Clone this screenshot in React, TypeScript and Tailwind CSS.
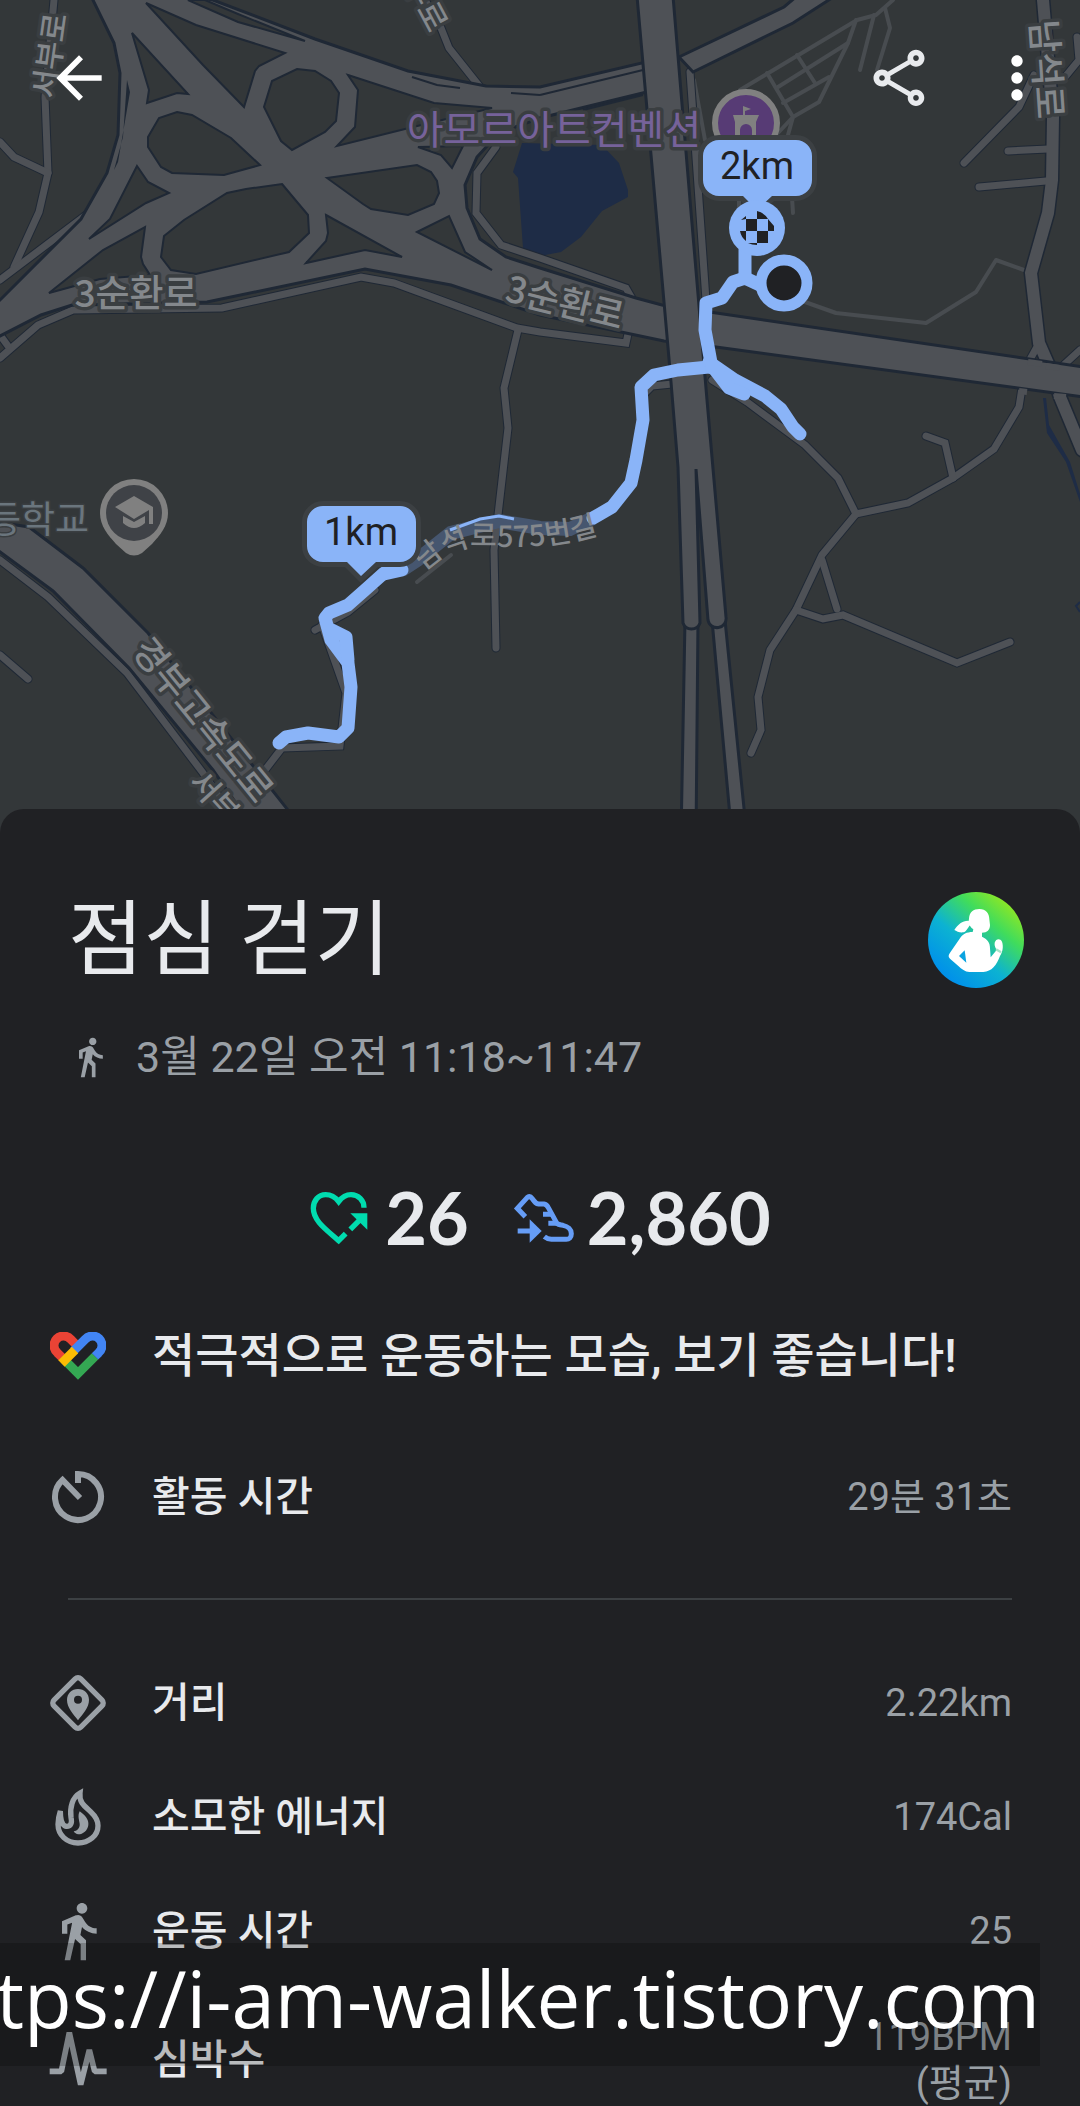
import type { ReactNode } from 'react';
import { MdArrowBack, MdDirectionsWalk, MdMoreVert, MdOutlineShare } from 'react-icons/md';

const minorRoads = [
  '54,0 45,97 48,173 39,212 14,267',
  '0,280 86,215',
  '0,142 14,157 48,173',
  '0,358 38,325 73,310 222,308 361,277 394,283 517,328 540,332 626,343 631,320',
  '496,147 477,173 476,213 501,245 540,258 626,288 634,302',
  '0,335 8,346',
  '518,330 504,388 508,428 498,515 494,550 496,648',
  '425,0 441,28 449,48 480,87',
  '690,72 706,300',
  '1022,388 1019,407 994,449 953,478 908,503 856,514 838,478 805,445 747,402 712,380',
  '926,436 945,443 953,478',
  '856,514 822,555 796,610 770,650 758,697 761,730 751,753',
  '822,560 837,609',
  '796,610 823,619 843,615 957,663 1010,642',
  '1077,37 1079,60 1065,77',
  '1034,75 1019,107 964,163',
  '1008,151 1048,149',
  '979,187 1046,181',
  '1038,345 1027,365',
  '1056,372 1080,350',
  '0,560 48,597 127,673 203,773 228,810',
  '0,655 28,679',
  '315,630 348,612 375,590',
  '322,625 346,693 340,746 282,748 265,770',
  '640,398 652,386 672,384',
];

const footpaths = [
  '893,0 876,15 857,20 740,90',
  '885,8 890,28 877,70',
  '874,15 860,70',
  '856,20 848,43 819,102 793,117 788,135 793,213',
  '767,73 793,117 778,133',
  '778,87 848,43',
  '797,55 815,83',
  '783,103 829,77',
  '752,283 805,302 836,313 926,323 976,292 996,260 1024,270',
  '694,80 705,140',
  '417,582 451,555',
  '739,200 739,210',
];

// land enclosed by the ramps of the interchange
const islands = [
  '146,3 196,25 285,53 259,66 255,71 244,107 203,65',
  '132,33 188,94 177,93 147,103 149,90',
  '297,69 315,71 331,81 339,93 336,121 325,132 292,150 281,141 264,107 272,81',
  '177,112 192,115 231,138 260,165 224,175 172,173 161,167 148,147 148,137 159,118',
  '282,184 308,215 309,233 289,252 196,274 171,270 161,257 164,236 184,220 227,193 246,189',
  '327,178 417,165 431,172 437,181 439,193 434,204 408,215 371,209 363,204',
  '137,166 148,182 169,193 146,203 89,239 110,219',
  '145,227 141,257 143,264 150,275 100,279 49,293 103,250',
  '326,215 402,257 365,250 306,263 326,241 328,233',
  '417,232 449,216 465,252 492,270',
  '348,75 434,103 492,108 413,127 337,146 355,127 358,90',
  '418,147 463,146 452,168 441,155',
  '188,0 205,0 238,14 305,41 238,22',
];

const route = [
  '279,743 286,737 308,733 339,737 348,728 351,687 348,663 331,640 325,618 329,613 348,605 365,590 384,573',
  '332,630 346,637 348,660',
  '384,574 402,570',
  '593,518 612,507 631,483 636,460 643,420 641,387 654,375 678,370 709,367',
  '712,368 705,330 706,303 722,298 733,282 745,278 760,285',
  '745,278 745,250 752,233',
  '709,362 735,380 765,396 781,409 793,427 800,434',
  '712,366 729,388 744,394',
];

function RouteMap() {
  return (
    <svg viewBox="0 0 1080 834" className="block w-full" role="img" aria-label="이동 경로 지도">
      <rect width="1080" height="834" fill="#333739" />

      {/* Water */}
      <path d="M522 143L513 172L518 178L523 248L540 256L561 252L581 237L602 211L628 197V190L619 163L602 145Z" fill="#1e2c46" />
      <path d="M1043 398L1047 433L1066 462L1080 502V494L1070 462L1049 425L1046 398Z" fill="#1e2c46" />
      <path d="M1080 602L1076 606L1080 612" fill="none" stroke="#1e2c46" strokeWidth="2" />

      <g fill="none" stroke="#484c50" strokeWidth="4" strokeLinejoin="round" strokeLinecap="round">
        {footpaths.map((points) => (
          <polyline key={points} points={points} />
        ))}
      </g>

      {/* Casing first, then the road surface, so that junctions stay open */}
      <g fill="none" stroke="#1f2835" strokeWidth="9" strokeLinecap="round">
        {minorRoads.map((points) => (
          <polyline key={points} points={points} />
        ))}
        <polyline points="1043,0 1053,117 1052,180 1048,213 1031,273 1039,343 1053,375 1060,397 1082,450" strokeWidth="15" />
      </g>
      <g fill="none" stroke="#4e5156" strokeWidth="7" strokeLinecap="round">
        {minorRoads.map((points) => (
          <polyline key={points} points={points} />
        ))}
        <polyline points="1043,0 1053,117 1052,180 1048,213 1031,273 1039,343 1053,375 1060,397 1082,450" strokeWidth="12" />
      </g>

      {/* Interchange */}
      <g fill="#4e5156" stroke="#1f2835" strokeWidth="3">
        <polygon points="91,-4 190,-4 213,0 315,39 408,71 486,86 540,87 650,61 655,90 540,118 499,133 477,157 465,185 467,208 480,239 506,257 540,268 636,298 662,305 1084,367 1084,397 716,347 664,341 540,315 451,285 365,269 207,302 72,305 41,315 -4,338 -4,304 81,219 86,210 107,173 118,135 120,73 114,43" />
        <g fill="#333739" strokeWidth="2">
          {islands.map((points) => (
            <polygon key={points} points={points} />
          ))}
        </g>
        <path d="M540 95L643 70M583 110L643 95M412 77L437 85L460 88M511 93L540 95" fill="none" strokeWidth="2" />
        <path d="M127 80L130 92L118 162L114 170L123 137Z" fill="#1f2835" stroke="none" />
        <path d="M679 57L784 7L797 -4H835L793 23L693 72Z" />
        <path d="M-4 522L29 527L83 568L148 633L310 838H260L213 770L129 668L53 591L-4 549Z" />
        <path d="M685 620L681 838H696L698 620Z" />
        <path d="M712 620L732 838H747L725 620Z" />
        <path d="M637 -4H673L690 200L707 400L726 617A9 9 0 0 1 708 620L696 469L700 623A9 9 0 0 1 683 623L678 467L670 370Z" />
      </g>
      <path d="M1028 362L1042 364M1046 366L1060 368M1019 391L1027 392M1054 396L1066 397" stroke="#4e5156" strokeWidth="6" />

      {/* Recorded route */}
      <path d="M402 570L417 560L451 533L499 521L540 528L570 529L593 518" fill="none" stroke="#46566f" strokeWidth="14" />
      <path d="M450 530L480 519L499 516L514 519" fill="none" stroke="#8ab4f8" strokeWidth="3" />
      <g fill="none" stroke="#8ab4f8" strokeWidth="13" strokeLinejoin="round" strokeLinecap="round">
        {route.map((points) => (
          <polyline key={points} points={points} />
        ))}
      </g>

      {/* Place and street names */}
      <g
        fill="#84888c"
        stroke="#3a3e41"
        strokeWidth="7"
        strokeLinejoin="round"
        className="font-['Noto_Sans_CJK_KR',sans-serif] font-medium [paint-order:stroke]"
        textAnchor="middle"
      >
        <text fontSize="37" x="136" y="307">3순환로</text>
        <text fontSize="36" transform="translate(562 315) rotate(14)">3순환로</text>
        <text fontSize="31" transform="translate(61 57) rotate(-82)">서부로</text>
        <text fontSize="36" transform="translate(1034 70) rotate(86)">남석로</text>
        <text fontSize="36" transform="translate(193 728) rotate(51)">경부고속도로</text>
        <text fontSize="31" transform="translate(216 815) rotate(48)">서부로</text>
        <text fontSize="31" transform="translate(416 9) rotate(62)">부로</text>
        <text fontSize="40" x="554" y="144" fill="#76629a" fontWeight="400">아모르아트컨벤션</text>
        <text fontSize="37" x="38" y="533" fill="#6a757d" strokeWidth="3" fontWeight="400">등학교</text>
        <path id="street" d="M424 572Q450 545 485 546Q545 551 606 532" fill="none" stroke="none" />
        <text fontSize="29" textAnchor="start" strokeWidth="0">
          <textPath href="#street">남석로575번길</textPath>
        </text>
      </g>

      {/* Convention hall */}
      <circle cx="746" cy="123" r="31" fill="#573b75" stroke="#808080" strokeWidth="6" />
      <path d="M733 115H743V106L751 109L745 111V115H759L756 122V140H752V130A6 6 0 0 0 740 130V140H735V122Z" fill="#808080" />

      {/* School */}
      <path d="M134 479A34 34 0 0 1 168 513C168 526 160 535 152 544L142 553Q134 558 126 553L116 544C108 535 100 526 100 513A34 34 0 0 1 134 479Z" fill="#808080" />
      <circle cx="134" cy="513" r="28" fill="#3f4247" />
      <path d="M115 507L134 496L153 507V524H149V510L134 519Z" fill="#808080" />
      <path d="M123 516L134 522L145 516V523Q134 533 123 523Z" fill="#808080" />

      {/* Kilometre markers */}
      <g fill="#8ab4f8" stroke="#3c4043" strokeWidth="10" className="[paint-order:stroke]">
        <path d="M323 506H400A16 16 0 0 1 416 522V546A16 16 0 0 1 400 562H376L361 576L347 562H323A16 16 0 0 1 307 546V522A16 16 0 0 1 323 506Z" />
        <path d="M719 140H796A16 16 0 0 1 812 156V180A16 16 0 0 1 796 196H772L757 210L743 196H719A16 16 0 0 1 703 180V156A16 16 0 0 1 719 140Z" />
      </g>
      <circle cx="757" cy="228" r="28" fill="#8ab4f8" />
      <path d="M757 211A17 17 0 0 1 768 219H757ZM746 219H757V231H746ZM741 220L746 216V219ZM768 219L774 226V231H768ZM740 231H746V241Q741 237 740 231ZM757 231H768V243H757ZM748 243H757V245Q752 245 748 243Z" fill="#202124" />
      <circle cx="784" cy="283" r="23" fill="#202124" stroke="#8ab4f8" strokeWidth="11" />
      <g fill="#202124" fontSize="38" textAnchor="middle" className="font-['Roboto',sans-serif]">
        <text x="361" y="545">1km</text>
        <text x="757" y="179">2km</text>
      </g>
    </svg>
  );
}

function RunnerBadge() {
  return (
    <svg viewBox="84 66 288 288" className="size-24 shrink-0" aria-hidden="true">
      <defs>
        <linearGradient id="badge" x1="0.2" y1="0.9" x2="0.85" y2="0.15">
          <stop offset="0" stopColor="#0090ea" />
          <stop offset="0.4" stopColor="#0cb2d2" />
          <stop offset="0.75" stopColor="#40dc5c" />
          <stop offset="1" stopColor="#86e62a" />
        </linearGradient>
      </defs>
      <circle cx="228" cy="210" r="144" fill="url(#badge)" />
      <path d="M238 117C258 117 268 130 268 148L270 165C270 180 262 188 246 188V200C262 208 270 216 270 235L272 262L290 240C288 235 282 228 284 218C288 206 300 204 306 215C311 230 308 245 300 258C290 285 275 305 250 306H208C195 305 185 298 175 288L150 266C144 260 145 255 150 248L180 205C188 192 200 186 218 186L220 178C205 168 206 155 207 145C209 125 220 117 238 117Z" fill="#fff" />
      <path d="M163 180C175 162 190 150 210 153L214 162C205 168 200 186 190 187C180 189 170 184 163 180Z" fill="#fff" />
      <path d="M177 258L194 241L199 278Z" fill="#0aa3e0" />
      <path d="M288 238L303 247" stroke="#a5e5c8" strokeWidth="7" />
    </svg>
  );
}

function HeartPointsIcon() {
  return (
    <svg viewBox="88 90 180 168" className="h-14 w-[60px]" fill="none" stroke="#00dcaf" strokeWidth="16" aria-hidden="true">
      <path d="M253 146C253 124 236 107 214 107C199 107 186 116 177 128C168 116 155 107 138 107C116 107 101 125 101 148C101 186 140 212 177 245L198 224" />
      <path d="M212 211L245 178" />
      <path d="M212 163H263V212Z" fill="#00dcaf" stroke="none" />
    </svg>
  );
}

function StepsIcon() {
  return (
    <svg viewBox="700 90 186 168" className="h-14 w-[62px]" fill="none" stroke="#669df6" strokeWidth="15" aria-hidden="true">
      <path d="M737 173L713 148L743 115C748 112 753 112 757 118C766 130 768 134 777 135H793C800 136 803 140 806 146L830 190C833 196 838 197 850 199C865 202 875 212 875 224C875 236 868 241 860 241H815C805 241 800 238 794 233" />
      <path d="M790 166H816M806 193H835M714 216H752" />
      <path d="M750 181L786 216L750 251Z" fill="#669df6" stroke="none" />
    </svg>
  );
}

function FitLogo() {
  return (
    <svg viewBox="0 0 56 48" className="h-12 w-14" fill="none" strokeWidth="9" aria-hidden="true">
      <path d="M45 24.4L28 41.4L14 27.4" stroke="#34a853" />
      <path d="M12 25.4L7.3 20.7A9.5 9.5 0 1 1 20.7 7.3L26 12.6" stroke="#ea4335" />
      <path d="M23.5 19L35.3 7.3A9.5 9.5 0 1 1 48.7 20.7L45 24.4" stroke="#4285f4" />
      <path d="M11.5 31.5L25 18" stroke="#fbbc04" />
    </svg>
  );
}

function TimerIcon() {
  return (
    <svg viewBox="0 0 56 56" className="size-14" fill="none" stroke="#9aa0a6" strokeWidth="6" aria-hidden="true">
      <path d="M28 14V5A23 23 0 1 1 12.5 11L30 29" />
    </svg>
  );
}

function DistanceIcon() {
  return (
    <svg viewBox="57 98 180 180" className="size-[60px]" aria-hidden="true">
      <rect x="90" y="131" width="114" height="114" rx="12" transform="rotate(45 147 188)" fill="none" stroke="#9aa0a6" strokeWidth="16" />
      <path fillRule="evenodd" d="M147 146C166 146 180 160 180 179C180 202 162 220 147 240C132 220 114 202 114 179C114 160 128 146 147 146ZM147 166A12 12 0 1 0 147 190A12 12 0 1 0 147 166Z" fill="#9aa0a6" />
    </svg>
  );
}

function EnergyIcon() {
  return (
    <svg viewBox="57 444 180 180" className="size-[60px]" aria-hidden="true">
      <path d="M153 462C150 490 165 500 185 518C200 532 207 545 207 560C207 590 180 612 147 612C113 612 87 588 87 556C87 540 90 528 94 516C94 545 100 560 112 562C125 563 130 552 126 535C122 505 130 475 153 462Z" fill="none" stroke="#9aa0a6" strokeWidth="16" />
      <path d="M152 517C168 528 180 542 178 558C176 575 162 586 148 586C142 585 137 582 134 577C146 575 153 566 152 555C151 545 145 530 152 517Z" fill="#9aa0a6" />
    </svg>
  );
}

function HeartRateIcon() {
  return (
    <svg viewBox="57 1178 180 180" className="size-[60px]" fill="none" stroke="#9aa0a6" strokeWidth="17" aria-hidden="true">
      <path d="M62 1302H97L121 1186L155 1342L181 1238L197 1302H233" strokeLinejoin="bevel" />
    </svg>
  );
}

const metrics: { icon: ReactNode; label: string; value: string }[] = [
  { icon: <DistanceIcon />, label: '거리', value: '2.22km' },
  { icon: <EnergyIcon />, label: '소모한 에너지', value: '174Cal' },
  { icon: <MdDirectionsWalk className="size-16" />, label: '운동 시간', value: '25' },
];

function MetricRow({ icon, label, value }: { icon: ReactNode; label: string; value: string }) {
  return (
    <div className="flex h-[114px] items-center">
      <div className="flex w-16 shrink-0 justify-center text-[#9aa0a6]">{icon}</div>
      <dt className="ml-[42px] text-[41px] leading-[46px] font-medium">{label}</dt>
      <dd className="ml-auto text-[38px] leading-[46px] text-[#9aa0a6]">{value}</dd>
    </div>
  );
}

export default function App() {
  return (
    <main className="relative min-h-screen overflow-hidden bg-[#202124] font-['Roboto','Noto_Sans_CJK_KR',sans-serif] text-[#e8eaed]">
      <RouteMap />

      {/* Toolbar over the map */}
      <header className="absolute inset-x-0 top-0 flex items-center pt-11 pr-[29px] pl-[45px]">
        <button type="button" aria-label="뒤로" className="text-white">
          <MdArrowBack className="size-[68px]" />
        </button>
        <button type="button" aria-label="공유" className="ml-auto">
          <MdOutlineShare className="size-[68px]" />
        </button>
        <button type="button" aria-label="더보기" className="ml-[50px] text-white">
          <MdMoreVert className="size-[68px]" />
        </button>
      </header>

      {/* Session details */}
      <section className="relative -mt-[25px] rounded-t-3xl bg-[#202124]">
        <div className="flex items-center justify-between pt-[83px] pr-14 pl-[68px]">
          <h1 className="text-[82px] leading-24">점심 걷기</h1>
          <RunnerBadge />
        </div>

        <p className="mt-[45px] flex items-center pl-[68px] text-[43px] leading-12 text-[#9aa0a6]">
          <MdDirectionsWalk className="mr-6 size-11" />
          3월 22일 오전 11:18~11:47
        </p>

        <div className="mt-[100px] flex items-center justify-center font-['Lato',sans-serif] text-[72px] leading-18 font-bold">
          <HeartPointsIcon />
          <span className="ml-4">26</span>
          <span className="ml-11">
            <StepsIcon />
          </span>
          <span className="ml-3">2,860</span>
        </div>

        <div className="mt-[75px] flex items-center pl-[46px]">
          <div className="flex w-16 shrink-0 justify-center">
            <FitLogo />
          </div>
          <p className="ml-[42px] text-[47px] leading-14 font-medium">적극적으로 운동하는 모습, 보기 좋습니다!</p>
        </div>

        <dl className="mt-14 pr-[68px] pl-[46px]">
          <MetricRow icon={<TimerIcon />} label="활동 시간" value="29분 31초" />
        </dl>

        <hr className="mx-[68px] mt-11 border-t-2 border-[#3c4043]" />

        <dl className="mt-[46px] pr-[68px] pl-[46px]">
          {metrics.map((metric) => (
            <MetricRow key={metric.label} icon={metric.icon} label={metric.label} value={metric.value} />
          ))}
          <div className="flex items-center pt-[26px]">
            <div className="flex w-16 shrink-0 justify-center">
              <HeartRateIcon />
            </div>
            <dt className="ml-[42px] text-[41px] leading-[46px] font-medium">심박수</dt>
            <dd className="ml-auto text-right text-[38px] leading-[46px] text-[#9aa0a6]">
              119BPM
              <br />
              (평균)
            </dd>
          </div>
        </dl>
      </section>

      {/* Watermark, runs off the left edge */}
      <div className="absolute right-10 bottom-10 left-0 flex h-[123px] items-center justify-end overflow-hidden bg-black/20 pb-3 font-['Open_Sans',sans-serif] text-[78px] whitespace-nowrap text-white">
        https://i-am-walker.tistory.com
      </div>
    </main>
  );
}
